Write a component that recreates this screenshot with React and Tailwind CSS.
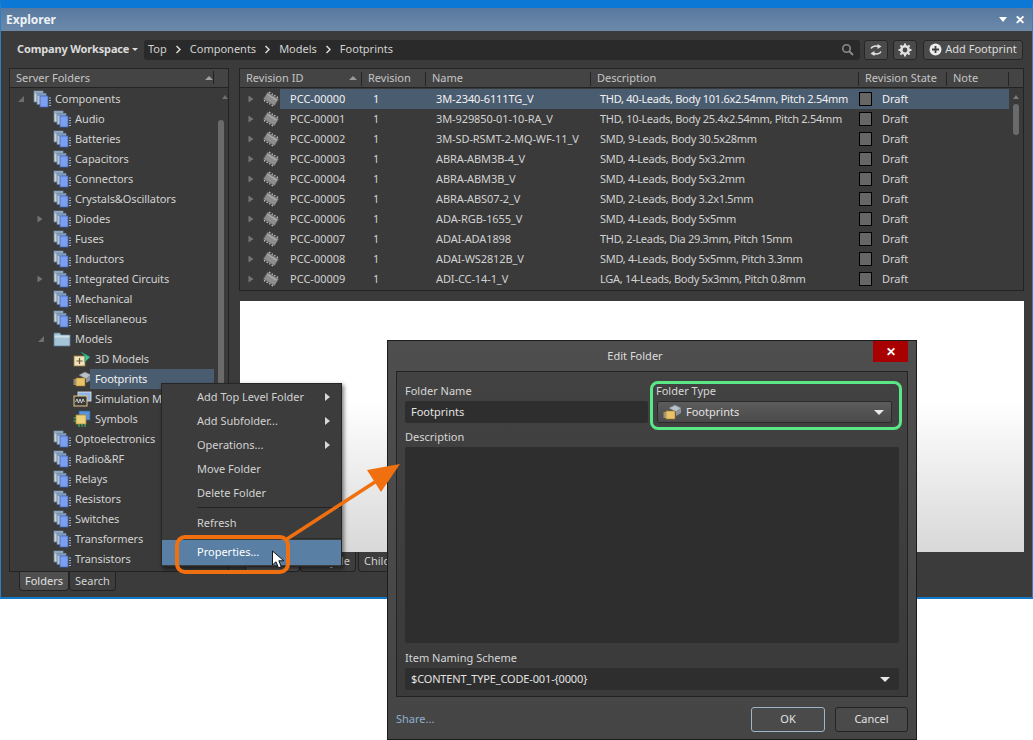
import React from "react";

const Stack = () => (
  <svg width="19" height="18" viewBox="0 0 19 18" className="shrink-0">
    <rect x="1" y="1" width="9" height="11" fill="#c9d3de" stroke="#6f7f92" strokeWidth="0.8" />
    <rect x="1" y="1" width="9" height="2.5" fill="#8fa6c0" />
    <rect x="4" y="3.5" width="9" height="11" fill="#b7c6da" stroke="#66788f" strokeWidth="0.8" />
    <rect x="4" y="3.5" width="9" height="2.5" fill="#7f9cc0" />
    <rect x="7" y="6" width="8" height="11" fill="#7c9ff0" stroke="#4466b5" strokeWidth="0.8" />
    <path d="M16 8h2M16 10.500h2M16 13h2M16 15.500h2" stroke="#a9b1bc" strokeWidth="1" />
  </svg>
);

const Folder = () => (
  <svg width="19" height="18" viewBox="0 0 19 18" className="shrink-0">
    <path d="M1 3h6l1 2h9v11H1z" fill="#a6c4d8" stroke="#5f7f96" strokeWidth="0.8" />
    <rect x="1.500" y="5.500" width="15" height="2" fill="#cfe0ea" />
  </svg>
);

const Chip = () => (
  <svg width="18" height="16" viewBox="0 0 18 16" className="shrink-0">
    <g transform="rotate(32 9 8)">
      <path d="M4.500 2.500v11M7.500 2.500v11M10.500 2.500v11M13.500 2.500v11" stroke="#c8c8c8" strokeWidth="1.400" />
      <rect x="2.500" y="4" width="13" height="8" fill="#8e8e8e" stroke="#5e5e5e" strokeWidth="0.6" />
      <path d="M3.500 6h11" stroke="#b0b0b0" strokeWidth="1" />
    </g>
  </svg>
);

const ModelIcon = () => (
  <svg width="19" height="18" viewBox="0 0 19 18" className="shrink-0">
    <rect x="1" y="6" width="11" height="10" fill="#f0e3c0" stroke="#9a7a35" strokeWidth="0.8" />
    <path d="M6.500 8v6M3.500 11h6" stroke="#6b5a2c" strokeWidth="1.200" />
    <path d="M8 2l9 5-5 5V6z" fill="#42c49a" stroke="#1f8a68" strokeWidth="0.7" />
  </svg>
);

const FootprintIcon = () => (
  <svg width="19" height="18" viewBox="0 0 19 18" className="shrink-0">
    <path d="M6 5l6-3 6 3-5 4z" fill="#b9c0c8" stroke="#717a84" strokeWidth="0.6" />
    <path d="M13 9l5-4v5l-5 3z" fill="#8c949d" />
    <rect x="3" y="8" width="9" height="8" fill="#e8c26a" stroke="#9d7a26" strokeWidth="0.6" />
    <path d="M0.500 10h2.500M0.500 12h2.500M0.500 14h2.500" stroke="#e6d6a0" strokeWidth="1" />
  </svg>
);

const SimIcon = () => (
  <svg width="19" height="18" viewBox="0 0 19 18" className="shrink-0">
    <rect x="5" y="2" width="13" height="9" fill="#8fb3e6" stroke="#e8e8e8" strokeWidth="0.8" />
    <rect x="1" y="6" width="13" height="10" fill="#3a3a3a" stroke="#e3c684" strokeWidth="1" />
    <path d="M2.500 12l1.500-3 1.500 4 1.500-4 1.500 4 1.500-4 1.500 3" fill="none" stroke="#e8e8e8" strokeWidth="0.8" />
  </svg>
);

const SymbolIcon = () => (
  <svg width="19" height="18" viewBox="0 0 19 18" className="shrink-0">
    <rect x="6" y="1" width="11" height="9" fill="#5d93d6" stroke="#2f5f9c" strokeWidth="0.7" />
    <rect x="3" y="5" width="10" height="9" fill="#ecd07a" stroke="#a78a32" strokeWidth="0.7" />
    <path d="M0.500 8h2.500M0.500 11h2.500M6 14v3M9 14v3M12 14v3" stroke="#45c25f" strokeWidth="1.100" />
  </svg>
);

const Tri = ({ open }) =>
  open ? (
    <svg width="8" height="8" viewBox="0 0 8 8"><path d="M7 1v6H1z" fill="#6e6e6e" /></svg>
  ) : (
    <svg width="6" height="8" viewBox="0 0 6 8"><path d="M0.500 0.500L5.500 4 0.500 7.500z" fill="#747474" /></svg>
  );

const Chev = () => (
  <svg width="7" height="9" viewBox="0 0 7 9" className="shrink-0">
    <path d="M1.500 1l3.500 3.500L1.500 8" fill="none" stroke="#d8d8d8" strokeWidth="1.500" />
  </svg>
);

const tree = [
  { t: "Components", l: 0, a: "open" },
  { t: "Audio", l: 1 },
  { t: "Batteries", l: 1 },
  { t: "Capacitors", l: 1 },
  { t: "Connectors", l: 1 },
  { t: "Crystals&Oscillators", l: 1 },
  { t: "Diodes", l: 1, a: "closed" },
  { t: "Fuses", l: 1 },
  { t: "Inductors", l: 1 },
  { t: "Integrated Circuits", l: 1, a: "closed" },
  { t: "Mechanical", l: 1 },
  { t: "Miscellaneous", l: 1 },
  { t: "Models", l: 1, a: "open", I: Folder },
  { t: "3D Models", l: 2, I: ModelIcon },
  { t: "Footprints", l: 2, I: FootprintIcon, sel: true },
  { t: "Simulation Models", l: 2, I: SimIcon },
  { t: "Symbols", l: 2, I: SymbolIcon },
  { t: "Optoelectronics", l: 1 },
  { t: "Radio&RF", l: 1 },
  { t: "Relays", l: 1 },
  { t: "Resistors", l: 1 },
  { t: "Switches", l: 1 },
  { t: "Transformers", l: 1 },
  { t: "Transistors", l: 1 },
];

const rows = [
  ["PCC-00000", "3M-2340-6111TG_V", "THD, 40-Leads, Body 101.6x2.54mm, Pitch 2.54mm"],
  ["PCC-00001", "3M-929850-01-10-RA_V", "THD, 10-Leads, Body 25.4x2.54mm, Pitch 2.54mm"],
  ["PCC-00002", "3M-SD-RSMT-2-MQ-WF-11_V", "SMD, 9-Leads, Body 30.5x28mm"],
  ["PCC-00003", "ABRA-ABM3B-4_V", "SMD, 4-Leads, Body 5x3.2mm"],
  ["PCC-00004", "ABRA-ABM3B_V", "SMD, 4-Leads, Body 5x3.2mm"],
  ["PCC-00005", "ABRA-ABS07-2_V", "SMD, 2-Leads, Body 3.2x1.5mm"],
  ["PCC-00006", "ADA-RGB-1655_V", "SMD, 4-Leads, Body 5x5mm"],
  ["PCC-00007", "ADAI-ADA1898", "THD, 2-Leads, Dia 29.3mm, Pitch 15mm"],
  ["PCC-00008", "ADAI-WS2812B_V", "SMD, 4-Leads, Body 5x5mm, Pitch 3.3mm"],
  ["PCC-00009", "ADI-CC-14-1_V", "LGA, 14-Leads, Body 5x3mm, Pitch 0.8mm"],
];

const TreeRow = ({ r }) => {
  const Icon = r.I || Stack;
  const pad = r.l === 0 ? "pl-[7px]" : r.l === 1 ? "pl-[27px]" : "pl-[47px]";
  return (
    <div className={`flex h-5 items-center ${pad}`}>
      <span className="flex w-[16px] shrink-0 items-center">
        {r.a === "open" && <Tri open />}
        {r.a === "closed" && <Tri />}
      </span>
      <Icon />
      <span className={`flex h-5 items-center pr-[8px] tracking-[-0.1px] ${r.sel ? "-ml-[2px] w-[124px] bg-[#4a5c70] pl-[5px] text-[#f2f2f2]" : "ml-[1px] pl-[2px]"}`}>
        {r.t}
      </span>
    </div>
  );
};

const Head = ({ w, children, sort }) => (
  <div className={`relative flex h-full items-center pl-[6px] ${w}`}>
    {children}
    {sort && <span className="absolute right-[5px] top-[7px] h-0 w-0 border-x-[4px] border-b-[4px] border-x-transparent border-b-[#9a9a9a]" />}
    <span className="absolute right-0 top-[3px] h-[14px] w-px bg-[#242424]" />
  </div>
);

const Row = ({ r, i }) => (
  <div className="flex h-5 items-center">
    <span className="flex w-[40px] shrink-0 items-center pl-[8px]">
      <Tri />
      <span className="ml-[8px]"><Chip /></span>
    </span>
    <div className={`grid h-5 flex-1 grid-cols-[84px_62px_164px_269px_23px_1fr] items-center ${i === 0 ? "bg-[#4a5c70] text-[#f2f2f2]" : ""}`}>
      <span className="pl-[10px]">{r[0]}</span>
      <span className="pl-[9px]">1</span>
      <span className="pl-[10px] tracking-[-0.1px]">{r[1]}</span>
      <span className="whitespace-nowrap pl-[10px] tracking-[-0.3px]">{r[2]}</span>
      <span className="h-[14px] w-[13px] border border-black bg-[#666666]" />
      <span>Draft</span>
    </div>
  </div>
);

const MenuItem = ({ t, arrow, sel }) => (
  <div className={`relative flex items-center pl-[35px] ${sel ? "h-[25px] bg-[#5a7fa4] text-white" : "h-6"}`}>
    {t}
    {arrow && <span className="absolute right-[11px] top-[8px] h-0 w-0 border-y-[4px] border-l-[5px] border-y-transparent border-l-[#d8d8d8]" />}
  </div>
);

const Caret = () => <span className="h-0 w-0 border-x-[5px] border-t-[5px] border-x-transparent border-t-[#e8e8e8]" />;

export default function App() {
  return (
    <div className="relative h-[740px] w-[1033px] overflow-hidden bg-white font-['Noto_Sans',sans-serif] text-[11px] text-[#d2d2d2]">
      {/* Explorer window */}
      <div className="flex h-[599px] flex-col border-x border-b-2 border-t-[8px] border-x-[#2f7fc4] border-b-[#1279c9] border-t-[#0a78d4] bg-[#3b3b3b]">
        <div className="flex h-[23px] shrink-0 items-center justify-between bg-gradient-to-b from-[#587a9f] to-[#6c89a9] pl-[5px] pr-[7px]">
          <span className="text-[12px] font-bold text-[#eef2f6]">Explorer</span>
          <div className="flex items-center gap-[8px]">
            <span className="h-0 w-0 border-x-[4px] border-t-[5px] border-x-transparent border-t-white" />
            <span className="text-[12px] font-bold leading-none text-white">✕</span>
          </div>
        </div>

        <div className="flex h-[37px] shrink-0 items-center pl-[16px] pr-[9px]">
          <div className="flex w-[127px] shrink-0 items-center gap-[3px] font-bold tracking-[-0.15px] text-[#dcdcdc]">
            <span>Company Workspace</span>
            <span className="h-0 w-0 border-x-[3px] border-t-[3px] border-x-transparent border-t-[#dcdcdc]" />
          </div>
          <div className="flex h-5 flex-1 items-center rounded-[3px] bg-[#2a2a2a] pl-[4px] pr-[6px]">
            <div className="flex items-center gap-[8px]">
              <span>Top</span><Chev /><span>Components</span><Chev /><span>Models</span><Chev /><span>Footprints</span>
            </div>
            <svg width="13" height="13" viewBox="0 0 13 13" className="ml-auto">
              <circle cx="5.500" cy="5.500" r="3.700" fill="none" stroke="#8a8a8a" strokeWidth="1.600" />
              <path d="M8.500 8.500L12 12" stroke="#8a8a8a" strokeWidth="2" />
            </svg>
          </div>
          <button className="ml-[4px] flex h-5 w-[24px] items-center justify-center rounded-[3px] border border-[#262626] bg-[#4a4a4a]">
            <svg width="14" height="14" viewBox="0 0 14 14">
              <path d="M2 5.500c1-2.500 5-3 7.500-2M12 8.500c-1 2.500-5 3-7.500 2" fill="none" stroke="#e0e0e0" strokeWidth="1.500" />
              <path d="M8.500 6L12.500 3.500 8.500 1zM5.500 8L1.500 10.500 5.500 13z" fill="#e0e0e0" />
            </svg>
          </button>
          <button className="ml-[5px] flex h-5 w-[24px] items-center justify-center rounded-[3px] border border-[#262626] bg-[#4a4a4a]">
            <svg width="14" height="14" viewBox="0 0 14 14">
              <circle cx="7" cy="7" r="3.700" fill="none" stroke="#e0e0e0" strokeWidth="2.600" />
              <path d="M7 0.500v2.500M7 11v2.500M0.500 7h2.500M11 7h2.500M2.400 2.400l1.800 1.800M9.800 9.800l1.800 1.800M11.600 2.400l-1.800 1.800M4.200 9.800l-1.800 1.800" stroke="#e0e0e0" strokeWidth="2" />
            </svg>
          </button>
          <button className="ml-[6px] flex h-5 w-[100px] items-center justify-center gap-[3px] rounded-[3px] border border-[#262626] bg-[#4a4a4a] text-[#dedede]">
            <svg width="13" height="13" viewBox="0 0 13 13">
              <circle cx="6.500" cy="6.500" r="6" fill="#ececec" />
              <path d="M6.500 3v7M3 6.500h7" stroke="#3f3f3f" strokeWidth="1.800" />
            </svg>
            Add Footprint
          </button>
        </div>

        <div className="flex flex-1 gap-[10px] pl-[8px]">
          {/* left column */}
          <div className="w-[220px] shrink-0">
            <div className="relative h-[504px] overflow-hidden border border-[#232323] bg-[#3a3a3a]">
              <div className="relative flex h-[19px] items-center border-b border-[#232323] bg-[#444444] pl-[6px] text-[#c4c4c4]">
                Server Folders
                <span className="absolute right-[15px] top-[7px] h-0 w-0 border-x-[4px] border-b-[4px] border-x-transparent border-b-[#a0a0a0]" />
                <span className="absolute right-[14px] top-[2px] h-[13px] w-px bg-[#222222]" />
              </div>
              <div className="pt-[1px]">
                {tree.map((r) => <TreeRow key={r.t} r={r} />)}
              </div>
              <span className="absolute left-[212px] top-[26px] h-0 w-0 border-x-[3px] border-b-[4px] border-x-transparent border-b-[#6e6e6e]" />
              <span className="absolute left-[208px] top-[51px] h-[340px] w-[6px] rounded-[3px] bg-[#6a6a6a]" />
            </div>
            <div className="flex pl-[10px]">
              <div className="flex h-[19px] w-[50px] items-center justify-center rounded-b-[4px] border border-t-0 border-[#232323] bg-[#4e4e4e] text-[#e0e0e0]">Folders</div>
              <div className="flex h-[19px] w-[47px] items-center justify-center rounded-b-[4px] border border-t-0 border-[#232323] bg-[#3d3d3d]">Search</div>
            </div>
          </div>

          {/* right column */}
          <div className="flex w-[785px] shrink-0 flex-col">
            <div className="h-[223px] overflow-hidden border border-[#232323] bg-[#3a3a3a]">
              <div className="flex h-[19px] items-center border-b border-[#232323] bg-[#444444] text-[#c4c4c4]">
                <Head w="w-[122px]" sort>Revision ID</Head>
                <Head w="w-[64px]">Revision</Head>
                <Head w="w-[165px]">Name</Head>
                <Head w="w-[268px]">Description</Head>
                <Head w="w-[88px]">Revision State</Head>
                <Head w="w-[62px]">Note</Head>
              </div>
              <div className="relative pt-[1px]">
                <div className="w-[769px]">
                  {rows.map((r, i) => <Row key={r[0]} r={r} i={i} />)}
                </div>
                <span className="absolute left-[773px] top-[7px] h-0 w-0 border-x-[3px] border-b-[4px] border-x-transparent border-b-[#7a7a7a]" />
                <span className="absolute left-[773px] top-[16px] h-[31px] w-[6px] rounded-[3px] bg-[#6a6a6a]" />
              </div>
            </div>
            <div className="ml-[1px] mt-[10px] h-[251px] bg-gradient-to-b from-white from-40% to-[#d8d8d8]" />
            <div className="flex h-5 items-center pl-[6px]">
              <div className="flex h-full w-[55px] items-center justify-center rounded-b-[4px] border border-t-0 border-[#232323] bg-[#4e4e4e]">Preview</div>
              <div className="flex h-full w-[56px] items-center justify-center rounded-b-[4px] border border-t-0 border-[#232323] bg-[#3d3d3d]">Lifecycle</div>
              <div className="ml-[2px] flex h-full w-[60px] items-center rounded-b-[4px] border border-t-0 border-[#232323] bg-[#3d3d3d] pl-[5px]">Children</div>
            </div>
          </div>
        </div>
      </div>

      {/* Context menu */}
      <div className="absolute left-[161px] top-[383px] w-[181px] border border-[#262626] bg-[#3c3c3c] py-[1px] shadow-[2px_2px_4px_rgba(0,0,0,0.5)]">
        <MenuItem t="Add Top Level Folder" arrow />
        <MenuItem t="Add Subfolder..." arrow />
        <MenuItem t="Operations..." arrow />
        <MenuItem t="Move Folder" />
        <MenuItem t="Delete Folder" />
        <div className="my-[2px] ml-[35px] h-px bg-[#222222]" />
        <div className="flex h-[26px] items-center pl-[35px]">Refresh</div>
        <div className="mb-[1px] mt-[2px] ml-[35px] h-px bg-[#2b2b2b]" />
        <MenuItem t="Properties..." sel />
      </div>

      {/* Dialog */}
      <div className="absolute left-[387px] top-[340px] flex h-[400px] w-[530px] flex-col border border-[#1c1c1c] bg-gradient-to-b from-[#4e4e4e] to-[#454545] text-[#d6d6d6]">
        <div className="relative flex h-[30px] shrink-0 items-center justify-center pr-[34px] text-[#dcdcdc]">
          Edit Folder
          <span className="absolute left-[485px] top-0 flex h-[21px] w-[35px] items-center justify-center bg-[#a80000] text-[12px] font-bold leading-none text-white">✕</span>
        </div>
        <div className="mx-[8px] flex h-[326px] shrink-0 flex-col border border-[#232323] bg-gradient-to-b from-[#424242] to-[#3a3a3a] px-[8px] pt-[11px]">
          <div className="flex gap-[9px]">
            <div className="w-[243px]">
              <div className="h-[18px] leading-[16px]">Folder Name</div>
              <div className="flex h-[22px] items-center rounded-[2px] bg-[#2e2e2e] pl-[6px] text-[#e2e2e2]">Footprints</div>
            </div>
            <div className="w-[235px]">
              <div className="-ml-[1px] h-[18px] leading-[16px]">Folder Type</div>
              <div className="flex h-[22px] items-center justify-between rounded-[2px] border border-[#2a2a2a] bg-gradient-to-b from-[#5c5c5c] to-[#4a4a4a] pl-[5px] pr-[7px] text-[#e2e2e2]">
                <span className="flex items-center gap-[4px]"><FootprintIcon />Footprints</span>
                <Caret />
              </div>
            </div>
          </div>
          <div className="mt-[6px] h-[18px] leading-[16px]">Description</div>
          <div className="h-[196px] rounded-[2px] bg-[#2e2e2e]" />
          <div className="mt-[7px] h-[18px] leading-[16px]">Item Naming Scheme</div>
          <div className="flex h-[22px] items-center justify-between rounded-[2px] bg-[#2e2e2e] pl-[6px] pr-[9px] text-[#e2e2e2]">
            <span className="tracking-[-0.15px]">$CONTENT_TYPE_CODE-001-{"{0000}"}</span>
            <Caret />
          </div>
        </div>
        <div className="flex flex-1 items-center justify-between pl-[8px] pr-[8px] pt-[2px]">
          <span className="text-[#8fb0cf]">Share...</span>
          <div className="flex gap-[10px]">
            <button className="h-[25px] w-[74px] rounded-[3px] border border-[#9db4c9] bg-[#4a4a4a] text-[#e2e2e2]">OK</button>
            <button className="h-[25px] w-[73px] rounded-[3px] border border-[#232323] bg-[#4a4a4a] text-[#e2e2e2]">Cancel</button>
          </div>
        </div>
      </div>

      {/* Annotations */}
      <div className="absolute left-[650px] top-[381px] h-[49px] w-[252px] rounded-[8px] border-[3px] border-[#5ae887]" />
      <div className="absolute left-[175px] top-[535px] h-[39px] w-[115px] rounded-[10px] border-[4px] border-[#f0700f]" />
      <svg className="absolute left-[275px] top-[455px]" width="130" height="95" viewBox="0 0 130 95">
        <path d="M12 84L100 27" stroke="#f0700f" strokeWidth="3.500" fill="none" />
        <path d="M125 9L92 15L106 37z" fill="#f0700f" />
      </svg>
      <svg className="absolute left-[271px] top-[550px]" width="18" height="20" viewBox="0 0 18 20">
        <path d="M1.500 1v14l3.500-3.200 2.500 6 2.800-1.200-2.500-5.800h5z" fill="#ffffff" stroke="#111111" strokeWidth="1" />
      </svg>
    </div>
  );
}
